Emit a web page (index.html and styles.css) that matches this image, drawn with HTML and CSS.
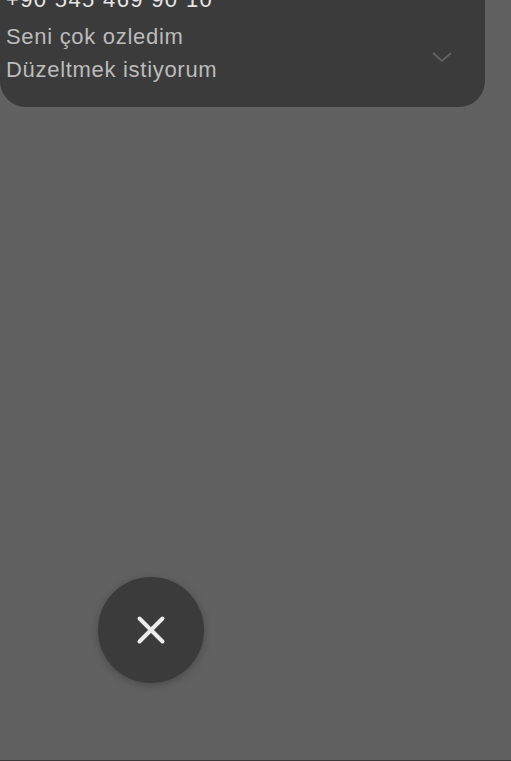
FILE: index.html
```html
<!DOCTYPE html>
<html lang="tr">
<head>
    <meta charset="UTF-8">
    <meta name="viewport" content="width=device-width, initial-scale=1.0">
    <title>Mesaj</title>
    <link rel="stylesheet" href="styles.css">
</head>
<body>
    <div class="card">
        <p class="phone">+90 545 469 90 10</p>
        <div class="message">
            <div class="lines">
                <p>Seni çok ozledim</p>
                <p>Düzeltmek istiyorum</p>
            </div>
            <svg class="chevron" width="22" height="12" viewBox="0 0 22 12">
                <path d="M2 2 L11 10 L20 2" fill="none" stroke="#616161" stroke-width="1.8"/>
            </svg>
        </div>
    </div>

    <button class="close-btn" aria-label="Kapat">
        <svg width="30" height="30" viewBox="0 0 30 30">
            <path d="M3.5 3.5 L26.5 26.5 M26.5 3.5 L3.5 26.5" stroke="#ececec" stroke-width="4" stroke-linecap="round"/>
        </svg>
    </button>
</body>
</html>
```

FILE: styles.css
```css
html, body {
    margin: 0;
    padding: 0;
}

body {
    width: 511px;
    height: 761px;
    overflow: hidden;
    background-color: #616161;
    font-family: "Liberation Sans", Arial, sans-serif;
    box-shadow: inset 0 -1px 0 #3a3a3a;
}

.card {
    width: 479px;
    margin-top: -46px;
    padding: 25px 0 21px 6px;
    background-color: #3b3b3b;
    border-radius: 0 0 26px 26px;
}

.card p {
    margin: 0;
    font-size: 22px;
    letter-spacing: 0.7px;
}

.card .phone {
    color: #e6e6e6;
    line-height: 41px;
    letter-spacing: 1.35px;
}

.message {
    display: flex;
    align-items: center;
}

.lines {
    flex: 1;
}

.lines p {
    color: #bcbcbc;
    line-height: 33px;
}

.chevron {
    margin-right: 32px;
    margin-top: 8px;
}

.close-btn {
    display: flex;
    align-items: center;
    justify-content: center;
    width: 106px;
    height: 106px;
    margin: 470px 0 0 98px;
    padding: 0;
    border: none;
    border-radius: 50%;
    background-color: #3b3b3b;
    box-shadow: 0 2px 8px rgba(0, 0, 0, 0.25);
}
```
